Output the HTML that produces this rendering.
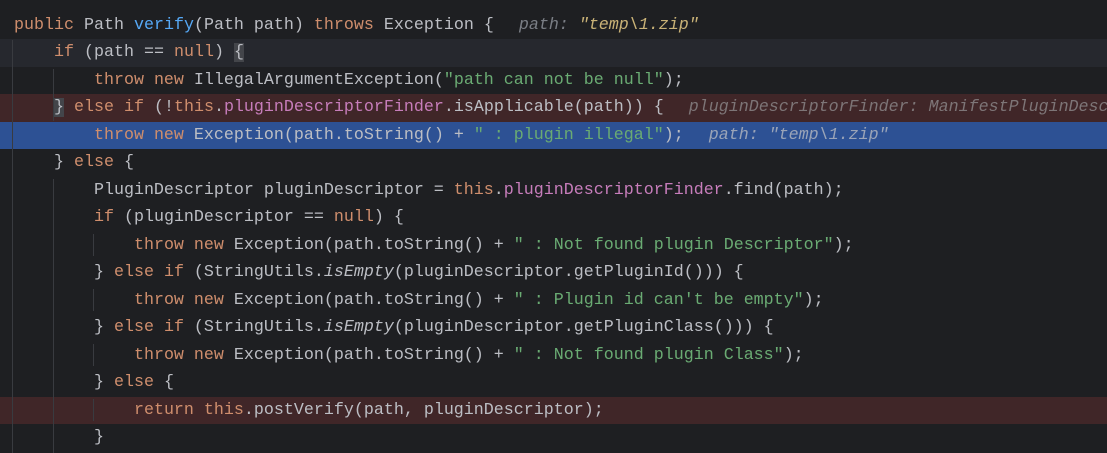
<!DOCTYPE html>
<html><head><meta charset="utf-8"><style>
body{margin:0;width:1107px;height:453px;background:#1e1f22;overflow:hidden;position:relative;font-family:"Liberation Mono",monospace;font-size:16.67px;color:#bcbec4}
.r{position:absolute;left:0;width:1107px;height:27.5px;line-height:27.5px;white-space:pre;overflow:hidden}
.t{position:absolute;left:14px;top:0}
.k{color:#cf8e6d}.m{color:#56a8f5}.s{color:#6aab73}.f{color:#c77dbb}.i{font-style:italic}
.h{color:#7a7e85;font-style:italic}.hv{color:#c9b277;font-style:italic}
.sp{margin-left:5px}
.g{position:absolute;width:1px;background:#393b40}
.bm{background:#43454a}
</style></head><body>
<div class="r" style="top:11.5px"><span class="t"><span class="k">public</span> Path <span class="m">verify</span>(Path path) <span class="k">throws</span> Exception {  <span class="h sp">path: </span><span class="hv">"temp\1.zip"</span></span></div>
<div class="r" style="top:39px;background:#26282e"><span class="t">    <span class="k">if</span> (path == <span class="k">null</span>) <span class="bm">{</span></span></div>
<div class="r" style="top:66.5px"><span class="t">        <span class="k">throw new</span> IllegalArgumentException(<span class="s">"path can not be null"</span>);</span></div>
<div class="r" style="top:94px;background:#402628"><span class="t">    <span class="bm">}</span> <span class="k">else if</span> (!<span class="k">this</span>.<span class="f">pluginDescriptorFinder</span>.isApplicable(path)) {  <span class="h sp" style="color:#7d7577">pluginDescriptorFinder: ManifestPluginDescriptorFinder</span></span></div>
<div class="r" style="top:121.5px;background:#2d5194"><span class="t">        <span class="k">throw new</span> Exception(path.toString() + <span class="s">" : plugin illegal"</span>);  <span class="h sp" style="color:#9aa4b8">path: "temp\1.zip"</span></span></div>
<div class="r" style="top:149px"><span class="t">    } <span class="k">else</span> {</span></div>
<div class="r" style="top:176.5px"><span class="t">        PluginDescriptor pluginDescriptor = <span class="k">this</span>.<span class="f">pluginDescriptorFinder</span>.find(path);</span></div>
<div class="r" style="top:204px"><span class="t">        <span class="k">if</span> (pluginDescriptor == <span class="k">null</span>) {</span></div>
<div class="r" style="top:231.5px"><span class="t">            <span class="k">throw new</span> Exception(path.toString() + <span class="s">" : Not found plugin Descriptor"</span>);</span></div>
<div class="r" style="top:259px"><span class="t">        } <span class="k">else if</span> (StringUtils.<span class="i">isEmpty</span>(pluginDescriptor.getPluginId())) {</span></div>
<div class="r" style="top:286.5px"><span class="t">            <span class="k">throw new</span> Exception(path.toString() + <span class="s">" : Plugin id can't be empty"</span>);</span></div>
<div class="r" style="top:314px"><span class="t">        } <span class="k">else if</span> (StringUtils.<span class="i">isEmpty</span>(pluginDescriptor.getPluginClass())) {</span></div>
<div class="r" style="top:341.5px"><span class="t">            <span class="k">throw new</span> Exception(path.toString() + <span class="s">" : Not found plugin Class"</span>);</span></div>
<div class="r" style="top:369px"><span class="t">        } <span class="k">else</span> {</span></div>
<div class="r" style="top:396.5px;background:#402628"><span class="t">            <span class="k">return this</span>.postVerify(path, pluginDescriptor);</span></div>
<div class="r" style="top:424px"><span class="t">        }</span></div>
<div class="g" style="left:12px;top:40px;height:413px"></div>
<div class="g" style="left:53px;top:69px;height:52px"></div>
<div class="g" style="left:53px;top:179px;height:274px"></div>
<div class="g" style="left:93px;top:234px;height:22px"></div>
<div class="g" style="left:93px;top:289px;height:22px"></div>
<div class="g" style="left:93px;top:344px;height:22px"></div>
<div class="g" style="left:93px;top:399px;height:22px"></div>
</body></html>
